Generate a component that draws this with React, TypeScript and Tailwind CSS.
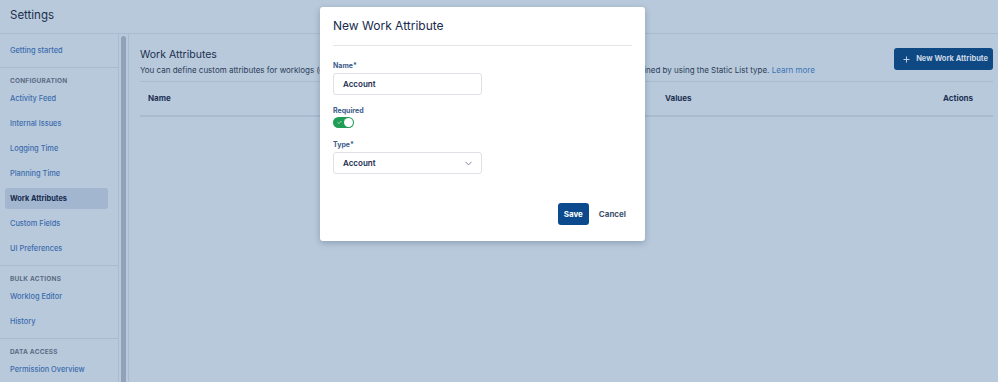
import { Check, ChevronDown, Plus } from "lucide-react";

const sections = [
  { title: null, items: ["Getting started"] },
  {
    title: "Configuration",
    items: [
      "Activity Feed",
      "Internal Issues",
      "Logging Time",
      "Planning Time",
      "Work Attributes",
      "Custom Fields",
      "UI Preferences",
    ],
  },
  { title: "Bulk Actions", items: ["Worklog Editor", "History"] },
  { title: "Data Access", items: ["Permission Overview"] },
];

function Sidebar() {
  return (
    <aside className="w-[119px] shrink-0 border-r border-[#a9bbcf]">
      {sections.map((section, i) => (
        <div
          key={i}
          className={
            i === sections.length - 1
              ? "pt-[4px]"
              : "border-b border-[#a9bbcf] pb-[4px] pt-[4px]"
          }
        >
          {section.title && (
            <p className="h-[14px] px-[10px] pt-[6px] text-[6.5px] font-bold uppercase leading-[7px] tracking-[0.2px] text-[#5b6c84]">
              {section.title}
            </p>
          )}
          {section.items.map((item) => (
            <div key={item} className="flex h-[25px] items-center px-[5px]">
              {item === "Work Attributes" ? (
                <div className="flex h-[21px] w-[103px] items-center rounded-[3px] bg-[#a3b6cf] px-[5px] text-[7.4px] font-bold text-[#142b4e]">
                  {item}
                </div>
              ) : (
                <div className="px-[5px] text-[7.4px] font-medium text-[#3b6cad]">
                  {item}
                </div>
              )}
            </div>
          ))}
        </div>
      ))}
    </aside>
  );
}

function NewAttributeModal() {
  return (
    <div className="absolute left-[320px] top-[7px] flex h-[234px] w-[325px] flex-col rounded-[3px] bg-white px-[13px] shadow-[0_2px_6px_rgba(9,30,66,0.25)]">
      <h2 className="flex h-[39px] shrink-0 items-center border-b border-[#e4e6ea] text-[12px] text-[#172b4d]">
        New Work Attribute
      </h2>

      <label className="mt-[16px] text-[7px] font-bold leading-[8px] text-[#3b5b8a]">
        Name*
      </label>
      <div className="mt-[3px] flex h-[22px] w-[149px] shrink-0 items-center rounded-[3px] border border-[#dfe1e6] px-[9px] text-[8px] font-semibold text-[#172b4d]">
        Account
      </div>

      <label className="mt-[12px] text-[7px] font-bold leading-[8px] text-[#3b5b8a]">
        Required
      </label>
      <div className="mt-[2px] flex h-[11px] w-[21px] shrink-0 items-center justify-between rounded-full bg-[#1f9d55] pl-[4px] pr-[1px]">
        <Check size={5} strokeWidth={3} className="text-white" />
        <span className="h-[9px] w-[9px] rounded-full bg-white" />
      </div>

      <label className="mt-[13px] text-[7px] font-bold leading-[8px] text-[#3b5b8a]">
        Type*
      </label>
      <div className="mt-[3px] flex h-[22px] w-[149px] shrink-0 items-center justify-between rounded-[3px] border border-[#dfe1e6] pl-[9px] pr-[7px] text-[8px] font-semibold text-[#172b4d]">
        <span>Account</span>
        <ChevronDown size={11} strokeWidth={1.5} className="text-[#42526e]" />
      </div>

      <div className="mt-[29px] flex justify-end gap-[5px]">
        <button className="h-[22px] rounded-[3px] bg-[#0b4a8c] px-[6px] text-[8px] font-bold text-white">
          Save
        </button>
        <button className="h-[22px] pl-[5px] pr-[6px] text-[8px] font-bold text-[#42526e]">
          Cancel
        </button>
      </div>
    </div>
  );
}

export default function App() {
  return (
    <div className="relative h-[382px] w-[998px] overflow-hidden bg-[#b8c9db] font-['Inter',sans-serif]">
      <header className="flex h-[34px] items-center border-b border-[#a9bbcf] px-[10px] pb-[2px] text-[11.5px] text-[#1c2f4d]">
        Settings
      </header>

      <div className="flex h-[348px]">
        <Sidebar />
        <div className="flex w-[10px] shrink-0 justify-center border-r border-[#a9bbcf] pt-[2px]">
          <div className="h-full w-[5px] rounded-t-full bg-[#8fa2b7]" />
        </div>

        <main className="flex-1 pl-[11px] pr-[5px] pt-[13px]">
          <div className="flex items-start justify-between border-b border-[#a9bbcf] pb-[5px]">
            <div>
              <h1 className="text-[10.5px] text-[#1c3050]">Work Attributes</h1>
              <p className="mt-[1px] whitespace-nowrap text-[8px] text-[#2a3c58]">
                You can define custom attributes for worklogs (e.g. Billable, Category, Location). Values can be free text, numbers, a checkbox or defined by using the Static List type.{" "}
                <span className="text-[#3b75b5]">Learn more</span>
              </p>
            </div>
            <button className="mt-[1px] flex h-[22px] items-center gap-[5px] rounded-[3px] bg-[#0f4984] pl-[8px] pr-[5px] text-[7.5px] font-bold text-[#cbd7e5]">
              <Plus size={9} strokeWidth={2.5} />
              New Work Attribute
            </button>
          </div>

          <div className="grid h-[35px] grid-cols-[517px_1fr_auto] items-center border-b-2 border-[#a9bbcf] px-[8px] pr-[20px] text-[8px] font-bold text-[#1c3254]">
            <span>Name</span>
            <span>Values</span>
            <span>Actions</span>
          </div>
        </main>
      </div>

      <NewAttributeModal />
    </div>
  );
}
